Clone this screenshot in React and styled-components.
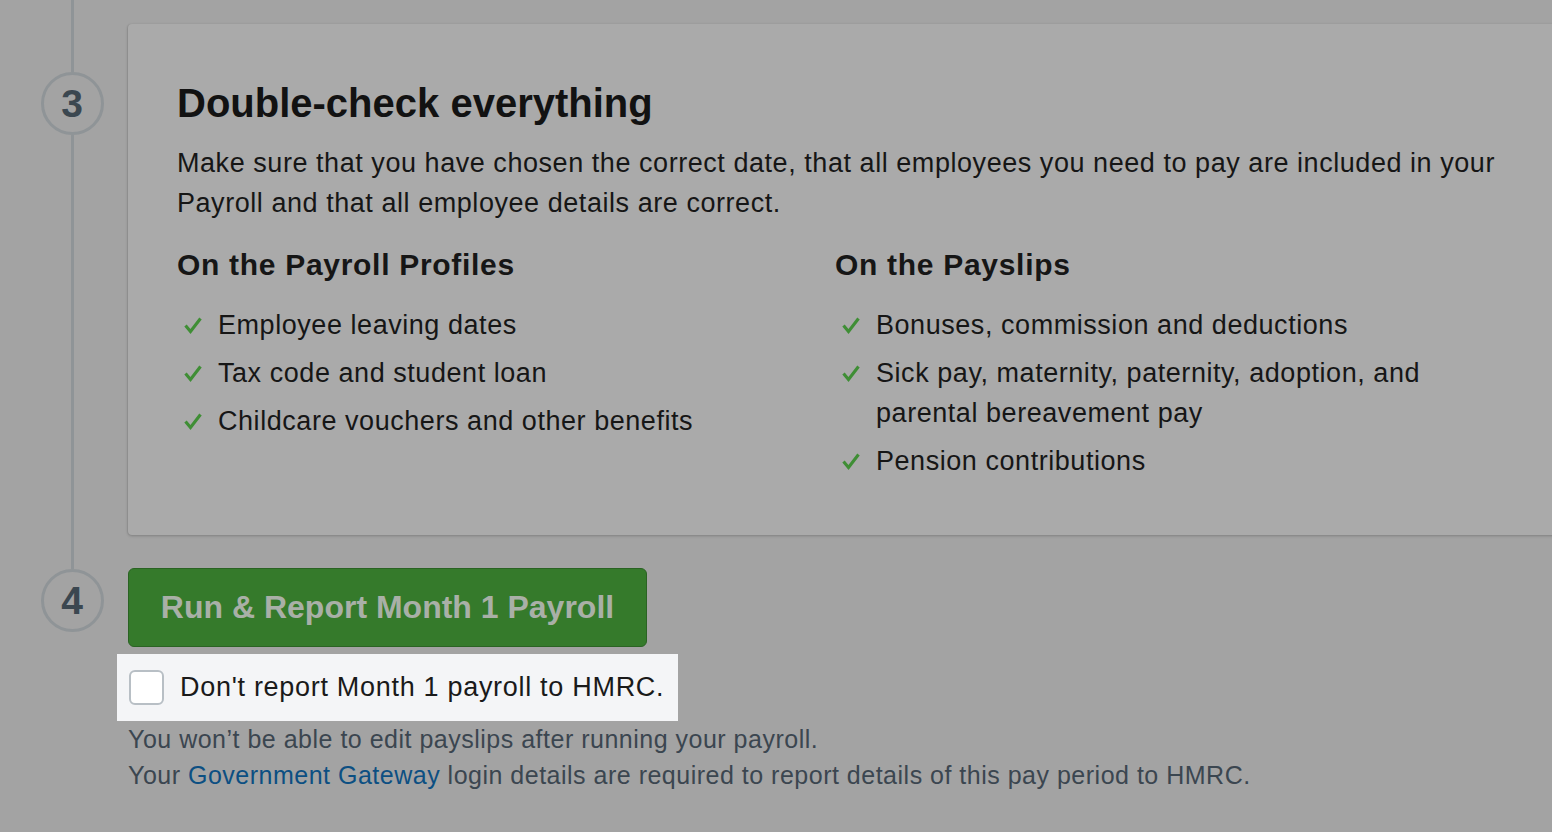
import styled, { createGlobalStyle } from "styled-components";

const Global = createGlobalStyle`
    html, body {
        margin: 0;
        padding: 0;
        background: #a3a3a3;
        font-family: "Liberation Sans", Arial, sans-serif;
    }
`

const profileChecks = [
    ["Employee leaving dates"],
    ["Tax code and student loan"],
    ["Childcare vouchers and other benefits"],
]

const payslipChecks = [
    ["Bonuses, commission and deductions"],
    ["Sick pay, maternity, paternity, adoption, and", "parental bereavement pay"],
    ["Pension contributions"],
]

function Tick() {
    return (
        <TickMark viewBox="0 0 18 18">
            <polyline points="1.5,9.5 6.5,15.5 16.5,2.5" fill="none" stroke="#3f8e35" strokeWidth="3.1" />
        </TickMark>
    )
}

function CheckList({ items }) {
    return (
        <List>
            {items.map((lines) => (
                <Item key={lines[0]}>
                    <Tick />
                    <span>
                        {lines.map((l, i) => (
                            <span key={l}>{i > 0 && <br />}{l}</span>
                        ))}
                    </span>
                </Item>
            ))}
        </List>
    )
}

function App() {
    return (
        <Page>
            <Global />
            <Step>
                <Rail>
                    <Line size="72px" />
                    <Badge>3</Badge>
                    <Line grow />
                </Rail>
                <Card>
                    <Title>Double-check everything</Title>
                    <Lead>
                        Make sure that you have chosen the correct date, that all employees you need to pay are included in your<br />
                        Payroll and that all employee details are correct.
                    </Lead>
                    <Columns>
                        <div>
                            <SubTitle>On the Payroll Profiles</SubTitle>
                            <CheckList items={profileChecks} />
                        </div>
                        <div>
                            <SubTitle>On the Payslips</SubTitle>
                            <CheckList items={payslipChecks} />
                        </div>
                    </Columns>
                </Card>
            </Step>
            <Step>
                <Rail>
                    <Line size="34px" />
                    <Badge>4</Badge>
                </Rail>
                <Action>
                    <RunButton>Run &amp; Report Month 1 Payroll</RunButton>
                    <Spotlight>
                        <Box type="checkbox" />
                        <span>Don't report Month 1 payroll to HMRC.</span>
                    </Spotlight>
                    <Hint>
                        You won’t be able to edit payslips after running your payroll.<br />
                        Your <Link href="#">Government Gateway</Link> login details are required to report details of this pay period to HMRC.
                    </Hint>
                </Action>
            </Step>
        </Page>
    )
}

const Page = styled.div`
    width: 1552px;
    height: 832px;
    overflow: hidden;
    background: #a3a3a3;
`
const Step = styled.div`
    display: flex;
    align-items: stretch;
`
const Rail = styled.div`
    width: 128px;
    flex-shrink: 0;
    display: flex;
    flex-direction: column;
    align-items: center;
    padding-left: 16px;
    box-sizing: border-box;
`
const Line = styled.div`
    width: 3px;
    background: #8f9497;
    height: ${props => props.size || "auto"};
    flex: ${props => props.grow ? "1" : "none"};
`
const Badge = styled.div`
    width: 63px;
    height: 63px;
    box-sizing: border-box;
    border: 3px solid #8f9497;
    border-radius: 50%;
    display: flex;
    align-items: center;
    justify-content: center;
    font-size: 39px;
    font-weight: 700;
    color: #3b4750;
    flex-shrink: 0;
`
const Card = styled.div`
    flex: 1;
    margin: 24px -12px 0 0;
    height: 511px;
    box-sizing: border-box;
    padding: 57px 40px 0 49px;
    background: #aaaaaa;
    border-radius: 4px;
    box-shadow: 0 1px 3px rgba(0, 0, 0, 0.22), -1px 0 1px rgba(0, 0, 0, 0.06);
    color: #161616;
`
const Title = styled.h2`
    margin: 0;
    font-size: 40px;
    line-height: 44px;
    font-weight: 700;
    color: #121212;
`
const Lead = styled.p`
    margin: 18px 0 0;
    font-size: 27px;
    letter-spacing: 0.55px;
    line-height: 40px;
    white-space: nowrap;
`
const Columns = styled.div`
    display: grid;
    grid-template-columns: 658px 1fr;
    margin-top: 22px;
`
const SubTitle = styled.h3`
    margin: 0;
    font-size: 30px;
    letter-spacing: 0.7px;
    line-height: 40px;
    font-weight: 700;
`
const List = styled.ul`
    list-style: none;
    margin: 20px 0 0;
    padding: 0;
    display: flex;
    flex-direction: column;
    gap: 8px;
`
const Item = styled.li`
    display: flex;
    align-items: flex-start;
    gap: 16px;
    font-size: 27px;
    letter-spacing: 0.55px;
    line-height: 40px;
    white-space: nowrap;
`
const TickMark = styled.svg`
    width: 18px;
    height: 18px;
    margin: 11px 0 0 7px;
    flex-shrink: 0;
`
const Action = styled.div`
    padding-top: 33px;
    display: flex;
    flex-direction: column;
    align-items: flex-start;
`
const RunButton = styled.button`
    width: 519px;
    height: 79px;
    border: 1px solid #2a6323;
    border-radius: 6px;
    background: #357a2b;
    color: #a9b0a7;
    font-family: "Liberation Sans", Arial, sans-serif;
    font-size: 32px;
    font-weight: 700;
    cursor: pointer;
`
const Spotlight = styled.label`
    margin: 7px 0 0 -11px;
    width: 561px;
    height: 67px;
    box-sizing: border-box;
    padding: 0 12px;
    display: flex;
    align-items: center;
    gap: 16px;
    background: #f4f5f7;
    font-size: 27px;
    letter-spacing: 0.7px;
    color: #1a1a1a;
`
const Box = styled.input`
    appearance: none;
    margin: 0;
    width: 35px;
    height: 35px;
    box-sizing: border-box;
    border: 2px solid #b8bfc5;
    border-radius: 6px;
    background: #ffffff;
    flex-shrink: 0;
`
const Hint = styled.p`
    margin: 0;
    font-size: 25px;
    letter-spacing: 0.5px;
    line-height: 36px;
    color: #3b4650;
`
const Link = styled.a`
    color: #0c4f82;
    text-decoration: none;
`

export default App;
